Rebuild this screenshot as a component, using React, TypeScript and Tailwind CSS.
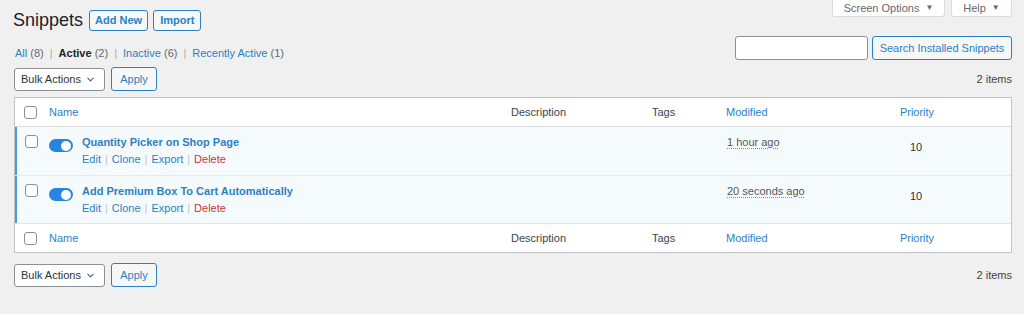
import { ChevronDown } from 'lucide-react'

interface Snippet {
  name: string
  modified: string
  priority: number
}

const snippets: Snippet[] = [
  { name: 'Quantity Picker on Shop Page', modified: '1 hour ago', priority: 10 },
  { name: 'Add Premium Box To Cart Automatically', modified: '20 seconds ago', priority: 10 },
]

const cols = 'grid grid-cols-[26px_462px_141px_74px_112px_174px_1fr]'

function Checkbox() {
  return <div className="w-[13px] h-[13px] rounded-[3px] border border-[#8c8f94] bg-white" />
}

function Toggle() {
  return (
    <div className="w-[24px] h-[13px] rounded-full bg-[#2684e2] flex items-center justify-end pr-[2px]">
      <div className="w-[10px] h-[10px] rounded-full bg-white" />
    </div>
  )
}

function TableNav() {
  return (
    <div className="flex items-center justify-between h-[24px]">
      <div className="flex items-center gap-[6px]">
        <div className="w-[91px] h-[23px] flex items-center justify-between pl-[6px] pr-[8px] border border-[#8c8f94] rounded-[3px] bg-white text-[#2c3338]">
          <span>Bulk Actions</span>
          <ChevronDown className="w-[11px] h-[11px] text-[#50575e]" strokeWidth={2.2} />
        </div>
        <div className="w-[46px] h-[24px] flex items-center justify-center border border-[#2c81c2] rounded-[3px] bg-[#f6f7f7] text-[#2c81c2]">
          Apply
        </div>
      </div>
      <span className="text-[#3c434a]">2 items</span>
    </div>
  )
}

function HeaderRow({ footer }: { footer?: boolean }) {
  return (
    <div className={`${cols} h-[29px] items-center ${footer ? 'border-t border-[#e2e4e7]' : 'border-b border-[#dcdcde]'}`}>
      <div className="flex justify-end pr-[4px]">
        <Checkbox />
      </div>
      <span className="pl-[8px] text-[#2c81c2]">Name</span>
      <span className="pl-[8px] text-[#3c434a]">Description</span>
      <span className="pl-[8px] text-[#3c434a]">Tags</span>
      <span className="pl-[8px] text-[#2c81c2]">Modified</span>
      <span className="text-center text-[#2c81c2]">Priority</span>
      <span />
    </div>
  )
}

export default function App() {
  return (
    <div className="w-full h-[314px] bg-[#f0f0f1] text-[11px] text-[#3c434a] font-['Liberation_Sans',Arial,sans-serif] overflow-hidden">
      <div className="pl-[14px] pr-[12px]">
        {/* Title + screen options */}
        <div className="flex justify-between h-[31px]">
          <div className="flex items-center gap-[5px] pt-[10px] -ml-px">
            <h1 className="text-[18px] text-[#1d2327] mr-[1px] leading-[21px]">Snippets</h1>
            <div className="h-[21px] px-[5px] flex items-center border border-[#2c81c2] rounded-[3px] bg-[#f6f7f7] text-[#2c81c2] font-bold">
              Add New
            </div>
            <div className="h-[21px] px-[6px] flex items-center border border-[#2c81c2] rounded-[3px] bg-[#f6f7f7] text-[#2c81c2] font-bold">
              Import
            </div>
          </div>
          <div className="flex items-start gap-[6px]">
            <div className="w-[113px] h-[17px] flex items-center justify-center gap-[6px] bg-white border border-t-0 border-[#dcdcde] rounded-b-[3px] text-[#646970]">
              Screen Options <span className="text-[8px]">▼</span>
            </div>
            <div className="w-[61px] h-[17px] flex items-center justify-center gap-[6px] bg-white border border-t-0 border-[#dcdcde] rounded-b-[3px] text-[#646970]">
              Help <span className="text-[8px]">▼</span>
            </div>
          </div>
        </div>

        {/* Filters + search */}
        <div className="flex justify-between h-[36px]">
          <div className="pt-[14px] pl-px flex gap-[6px] items-center h-[30px] text-[#646970]">
            <span><span className="text-[#2c81c2]">All</span> (8)</span>
            <span className="text-[#a7aaad]">|</span>
            <span><span className="text-[#1d2327] font-bold">Active</span> (2)</span>
            <span className="text-[#a7aaad]">|</span>
            <span><span className="text-[#2c81c2]">Inactive</span> (6)</span>
            <span className="text-[#a7aaad]">|</span>
            <span><span className="text-[#2c81c2]">Recently Active</span> (1)</span>
          </div>
          <div className="pt-[5px] flex gap-[4px]">
            <div className="w-[133px] h-[24px] bg-white border border-[#8c8f94] rounded-[3px]" />
            <div className="w-[140px] h-[24px] flex items-center justify-center border border-[#2c81c2] rounded-[3px] bg-[#f6f7f7] text-[#2c81c2]">
              Search Installed Snippets
            </div>
          </div>
        </div>

        <TableNav />

        {/* Table */}
        <div className="mt-[6px] bg-white border border-[#c3c4c7]">
          <HeaderRow />
          {snippets.map((s, i) => (
            <div
              key={s.name}
              className={`${cols} h-[48px] bg-[#f5fbfd] shadow-[inset_2px_0_0_#4b9ad6] ${i > 0 ? 'border-t border-[#e6e8ea]' : ''}`}
            >
              <div className="flex justify-end pr-[3px] pt-[8px]">
                <Checkbox />
              </div>
              <div className="flex pl-[8px] pt-[8px]">
                <div className="pt-[4px]">
                  <Toggle />
                </div>
                <div className="pl-[9px]">
                  <div className="text-[#2c81c2] font-bold leading-[15px]">{s.name}</div>
                  <div className="flex items-center gap-[4px] mt-[2px] leading-[15px]">
                    <span className="text-[#2c81c2]">Edit</span>
                    <span className="text-[#c3c4c7]">|</span>
                    <span className="text-[#2c81c2]">Clone</span>
                    <span className="text-[#c3c4c7]">|</span>
                    <span className="text-[#2c81c2]">Export</span>
                    <span className="text-[#c3c4c7]">|</span>
                    <span className="text-[#c9353a]">Delete</span>
                  </div>
                </div>
              </div>
              <span />
              <span />
              <div className="pl-[9px] pt-[8px] leading-[15px]">
                <span className="text-[#50575e] underline decoration-dotted decoration-[#8c8f94] underline-offset-2">{s.modified}</span>
              </div>
              <div className="text-center pt-[13px] leading-[15px] text-[#2c3338] pr-[2px]">{s.priority}</div>
              <span />
            </div>
          ))}
          <HeaderRow footer />
        </div>

        <div className="mt-[10px]">
          <TableNav />
        </div>
      </div>
    </div>
  )
}
